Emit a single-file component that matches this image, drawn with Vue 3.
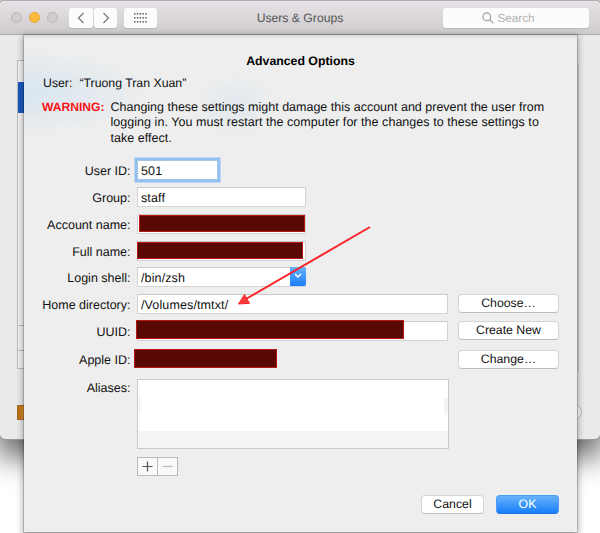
<script setup>
import { ref } from 'vue'

const userId = ref('501')
const rows = [
  { key: 'id', label: 'User ID:', height: 27 },
  { key: 'group', label: 'Group:', height: 27, value: 'staff', size: 'mid' },
  { key: 'account', label: 'Account name:', height: 27, size: 'mid', mask: 'mask-account' },
  { key: 'full', label: 'Full name:', height: 26, size: 'mid', mask: 'mask-full' },
  { key: 'shell', label: 'Login shell:', height: 27, value: '/bin/zsh', size: 'mid', combo: true },
  { key: 'home', label: 'Home directory:', height: 27, value: '/Volumes/tmtxt/', size: 'wide', button: 'Choose…' },
  { key: 'uuid', label: 'UUID:', height: 28, size: 'wide', mask: 'mask-uuid', button: 'Create New' },
  { key: 'apple', label: 'Apple ID:', height: 30, size: 'plain', mask: 'mask-apple', button: 'Change…' }
]
const dots = [0, 1, 2].flatMap(r => [0, 1, 2, 3, 4].map(c => ({ x: c * 2.8, y: r * 4 })))
</script>

<template>
  <div class="screen">
    <div class="window">
      <header class="toolbar">
        <div class="lights"><i></i><i class="amber"></i><i></i></div>
        <div class="nav">
          <button><svg width="8" height="12" viewBox="0 0 8 12"><path d="M6.5 1 1.5 6l5 5" /></svg></button>
          <button><svg width="8" height="12" viewBox="0 0 8 12"><path d="m1.5 1 5 5-5 5" /></svg></button>
        </div>
        <button class="grid-btn">
          <svg width="13" height="10" viewBox="0 0 13 10">
            <rect v-for="(d, i) in dots" :key="i" :x="d.x" :y="d.y" width="1.5" height="1.6" />
          </svg>
        </button>
        <h1>Users &amp; Groups</h1>
        <div class="search">
          <svg width="12" height="12" viewBox="0 0 12 12"><circle cx="4.8" cy="4.8" r="3.9" /><path d="m7.7 7.7 3.6 3.6" /></svg>
          <span>Search</span>
        </div>
      </header>
      <div class="pane">
        <div class="list"><div class="selected"></div><div class="line"></div><div class="line low"></div></div>
        <div class="right-edge"></div>
        <div class="lock"></div>
        <div class="help"></div>
      </div>
    </div>

    <section class="sheet">
      <h2>Advanced Options</h2>
      <p class="user"><span>User:</span><span class="name">“Truong Tran Xuan”</span></p>
      <div class="warning">
        <strong>WARNING:</strong>
        <p>
          <span class="l1">Changing these settings might damage this account and prevent the user from</span>
          <span class="l2">logging in. You must restart the computer for the changes to these settings to</span>
          <span class="l3">take effect.</span>
        </p>
      </div>

      <form class="form" @submit.prevent>
        <div v-for="r in rows" :key="r.key" class="row" :class="r.key" :style="{ height: r.height + 'px' }">
          <label>{{ r.label }}</label>
          <input v-if="r.key === 'id'" v-model="userId" class="field focused" />
          <div v-else class="field" :class="r.size">
            <span>{{ r.value }}</span>
            <i v-if="r.mask" class="mask" :class="r.mask"></i>
            <b v-if="r.combo" class="drop"><svg width="8" height="6" viewBox="0 0 8 6"><path d="m1 1 3 3 3-3" /></svg></b>
          </div>
          <button v-if="r.button" class="btn side">{{ r.button }}</button>
        </div>
        <div class="aliases">
          <label>Aliases:</label>
          <div class="box"><i class="thumb"></i><i class="mark"></i></div>
        </div>
        <div class="steppers">
          <button><svg width="11" height="11" viewBox="0 0 11 11"><path d="M0.5 5.5h10M5.5 0.5v10" /></svg></button>
          <button class="off"><svg width="11" height="11" viewBox="0 0 11 11"><path d="M0.5 5.5h10" /></svg></button>
        </div>
      </form>

      <footer>
        <button class="btn">Cancel</button>
        <button class="btn primary">OK</button>
      </footer>
    </section>

    <svg class="arrow" width="136" height="84" viewBox="0 0 136 84">
      <path d="M134 2 10 74" />
      <polygon points="2.5,79 8.5,69.5 13.5,78.3" />
    </svg>
  </div>
</template>

<style>
body { margin: 0; background: #fff; }
</style>

<style scoped>
* { box-sizing: border-box; }
.screen {
  position: relative; width: 600px; height: 533px; overflow: hidden; background: #fff;
  font: 12.5px/16px "Liberation Sans", Arial, sans-serif; color: #111;
  text-rendering: geometricPrecision;
}
button, input { font: inherit; color: inherit; margin: 0; padding: 0; outline: 0; text-rendering: inherit; }
h1, h2, p { margin: 0; }
.window {
  height: 438.5px; border-radius: 5px; overflow: hidden; background: #ebebeb;
  box-shadow: 0 0 0 1px #999, 0 14px 30px 4px rgba(0, 0, 0, .6);
}
.toolbar {
  height: 35px; display: flex; align-items: center; padding: 0 11px;
  background: linear-gradient(#e6e2e6, #cecbce); border-top: 1px solid #b5abb5; border-bottom: 1px solid #aaa;
}
.lights { display: flex; gap: 7px; width: 58px; }
.lights i { width: 11px; height: 11px; border-radius: 50%; background: #cfcdcf; border: 1px solid #b9b7b9; }
.lights .amber { background: #fdbc3e; border-color: #e5a53b; }
.nav { display: flex; gap: 1px; width: 55px; }
.toolbar button {
  display: flex; align-items: center; justify-content: center; height: 20px; width: 24px;
  border: 0; border-radius: 3px; background: #fcfcfc; box-shadow: 0 1px 0 #b9b7b9;
}
.nav button:last-child { width: 23px; }
.nav svg { fill: none; stroke: #777; stroke-width: 1.2; }
.toolbar .grid-btn { width: 33px; }
.grid-btn svg { fill: #666; }
.toolbar h1 { width: 143px; text-align: center; margin-left: 71.5px; font-size: 12.2px; font-weight: 400; color: #555; }
.search {
  display: flex; align-items: center; gap: 4px; width: 146px; height: 20px; margin-left: 71px; padding-left: 39px;
  flex: none; background: #fcfcfc; border-radius: 3px; box-shadow: 0 1px 0 #bbb; font-size: 11.7px; color: #b0b0b0;
}
.search span { padding-top: 2px; }
.search svg { fill: none; stroke: #999; stroke-width: 1.1; }
.pane { position: relative; height: 403px; }
.list { position: absolute; left: 17px; top: 25px; width: 20px; height: 309px; background: #f4f4f4; border: 1px solid #bbb; }
.selected { margin-top: 21px; height: 31px; background: #1b59c0; }
.line { margin-top: 212px; height: 1px; background: #bbb; }
.line.low { margin-top: 24px; }
.right-edge { position: absolute; left: 560px; top: 30px; width: 19px; height: 306px; border: 1px solid #ccc; background: #e4e4e4; }
.lock { position: absolute; left: 17px; top: 370px; width: 20px; height: 15px; background: linear-gradient(90deg, #bb690e, #e8a23d 40%); border: 1px solid #a96c28; }
.help { position: absolute; left: 566px; top: 369px; width: 16px; height: 16px; border-radius: 50%; background: #fafafa; border: 1px solid #bbb; }

.sheet {
  position: absolute; left: 24px; top: 35px; width: 553px; height: 497px; padding-top: 18px;
  background:
    radial-gradient(ellipse 120px 44px at 5px 57px, rgba(202, 224, 240, .6), transparent),
    radial-gradient(ellipse 42px 34px at 211px 71px, rgba(212, 227, 238, .5), transparent),
    #eee;
  box-shadow: 0 0 0 1px rgba(0, 0, 0, .16), 0 2px 7px 1px rgba(0, 0, 0, .35);
}
.sheet::before { content: ""; position: absolute; inset: 0 0 auto; height: 4px; background: linear-gradient(rgba(0, 0, 0, .09), transparent); }
h2 { text-align: center; font-size: 12.3px; line-height: 16px; color: #000; }
.user { display: flex; margin-top: 6px; padding-left: 19px; font-size: 12.3px; }
.user .name { margin-left: 7px; }
.warning { display: flex; margin-top: 9px; padding-left: 18px; }
.warning strong { width: 68.5px; color: #fb1317; line-height: 14px; font-size: 12.1px; }
.warning p { line-height: 15.3px; white-space: nowrap; }
.warning p span { display: block; }
.l2 { letter-spacing: .04px; }
.l3 { letter-spacing: .04px; }
.form { margin-top: 14px; }
.row { display: flex; align-items: flex-start; }
label { width: 106.5px; margin-right: 6.5px; text-align: right; line-height: 22px; flex: none; white-space: nowrap; }
.field { position: relative; height: 20px; padding: 1px 3px 0; line-height: 18px; border: 1px solid #d3d3d3; border-top-color: #c9c9c9; background: #fff; letter-spacing: .12px; }
.focused { width: 81px; padding-top: 2px; box-shadow: 0 0 0 2.5px #91c0f3; border-color: #a9c5e2; }
.mid { width: 169px; }
.wide { width: 311px; }
.plain { width: 311px; border-color: transparent; background: transparent; }
.mask { position: absolute; background: #590804; border: 1px solid #b71811; }
.mask-account { left: 1px; top: 0; width: 166px; height: 17px; }
.mask-full { left: -1px; top: 0; width: 166px; height: 17px; }
.mask-uuid { left: -2px; top: -2px; width: 268px; height: 19px; }
.mask-apple { left: -4px; top: -1px; width: 143px; height: 19px; }
.drop { position: absolute; right: -1px; top: -1px; width: 16px; height: 19px; background: linear-gradient(#67b1fa, #1b80fb); border-radius: 0 2px 2px 0; display: flex; align-items: center; justify-content: center; }
.drop svg { fill: none; stroke: #fff; stroke-width: 1.5; }
.btn { width: 63px; height: 19px; border: 1px solid #d5d5d5; border-bottom-color: #bdbdbd; border-radius: 4px; background: #fff; line-height: 16px; font-size: 12.3px; }
.side { width: 101px; margin-left: 10px; }
.apple .side { margin-top: 1px; }
.aliases { display: flex; }
.aliases label { line-height: 18px; }
.box { position: relative; width: 312px; height: 70px; border: 1px solid #c9c9c9; background: linear-gradient(#fff 51px, #f4f4f4 51px); }
.thumb { position: absolute; right: 0; top: 18px; width: 4px; height: 17px; background: #f4f4f4; }
.mark { position: absolute; left: 1px; top: 18px; width: 2px; height: 16px; background: #f5f3f1; }
.steppers { display: flex; margin: 8px 0 0 113px; }
.steppers button { width: 21px; height: 19px; display: flex; align-items: center; justify-content: center; border: 1px solid #bababa; background: #f9f9f9; }
.steppers button + button { margin-left: -1px; }
.steppers svg { fill: none; stroke: #555; stroke-width: 1.2; }
.steppers .off svg { stroke: #bbb; }
footer { display: flex; justify-content: flex-end; gap: 12px; margin-top: 19px; padding-right: 18px; }
.primary { color: #fff; border-color: #4b9cf5; border-bottom-color: #1a74ea; background: linear-gradient(#67b2fa, #187ffb); }
.arrow { position: absolute; left: 236px; top: 225px; }
.arrow path { stroke: #f8252b; stroke-width: 2; fill: none; }
.arrow polygon { fill: #fb3b3b; stroke: #f8252b; }
</style>
